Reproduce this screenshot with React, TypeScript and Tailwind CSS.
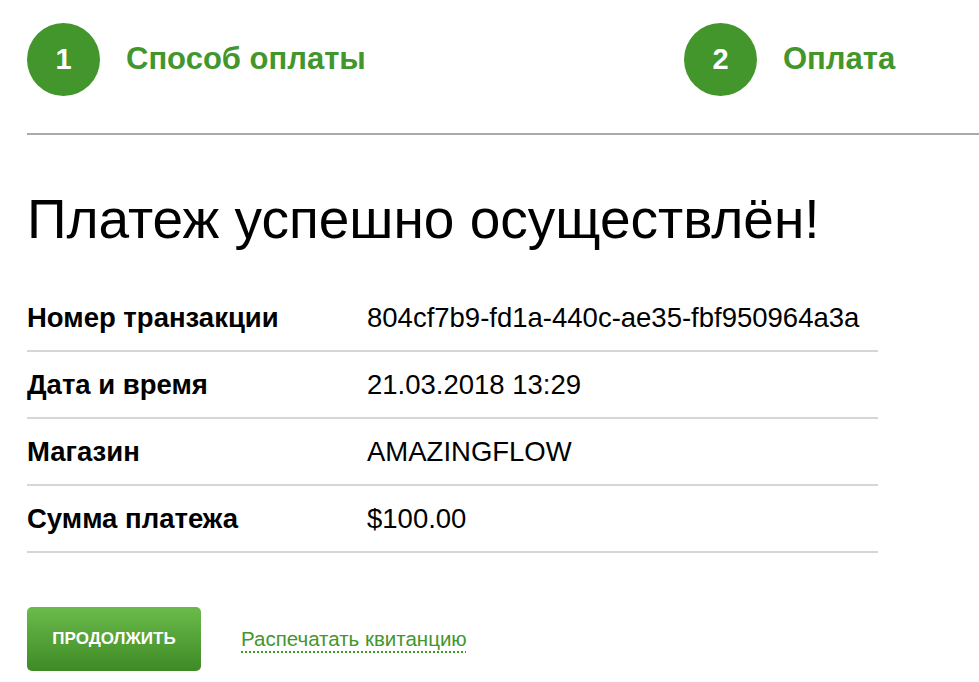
import React from 'react';

const rows = [
  { label: 'Номер транзакции', value: '804cf7b9-fd1a-440c-ae35-fbf950964a3a' },
  { label: 'Дата и время', value: '21.03.2018 13:29' },
  { label: 'Магазин', value: 'AMAZINGFLOW' },
  { label: 'Сумма платежа', value: '$100.00' },
];

const Step: React.FC<{ num: number; title: string; className?: string }> = ({ num, title, className }) => (
  <div className={`flex items-center ${className || ''}`}>
    <div className="w-[73px] h-[73px] rounded-full bg-[#43962b] flex items-center justify-center text-white font-bold text-[29px]">
      {num}
    </div>
    <div className="ml-[26px] text-[#43962b] font-bold text-[31px]">{title}</div>
  </div>
);

export default function App() {
  return (
    <div className="min-h-screen bg-white pl-[27px] pt-[23px] font-['Liberation_Sans',Arial,sans-serif] text-black">
      <div className="flex border-b-2 border-[#aaaaaa] pb-[37px]">
        <Step num={1} title="Способ оплаты" className="w-[657px]" />
        <Step num={2} title="Оплата" />
      </div>

      <h1 className="mt-[54px] text-[55px] leading-[60px] font-normal">Платеж успешно осуществлён!</h1>

      <div className="mt-[36px] w-[851px]">
        {rows.map((row) => (
          <div key={row.label} className="flex items-center h-[67px] border-b-2 border-[#d6d6d6]">
            <div className="w-[340px] font-bold text-[27.5px]">{row.label}</div>
            <div className="text-[27.5px]">{row.value}</div>
          </div>
        ))}
      </div>

      <div className="mt-[54px] flex items-center">
        <button className="w-[174px] h-[64px] rounded-[5px] bg-gradient-to-b from-[#6bbb4b] to-[#3e8a25] text-white text-[17px] font-bold uppercase">
          Продолжить
        </button>
        <a href="#" className="ml-[40px] text-[#43962b] text-[20.5px] underline decoration-dotted underline-offset-[6px]">
          Распечатать квитанцию
        </a>
      </div>
    </div>
  );
}
